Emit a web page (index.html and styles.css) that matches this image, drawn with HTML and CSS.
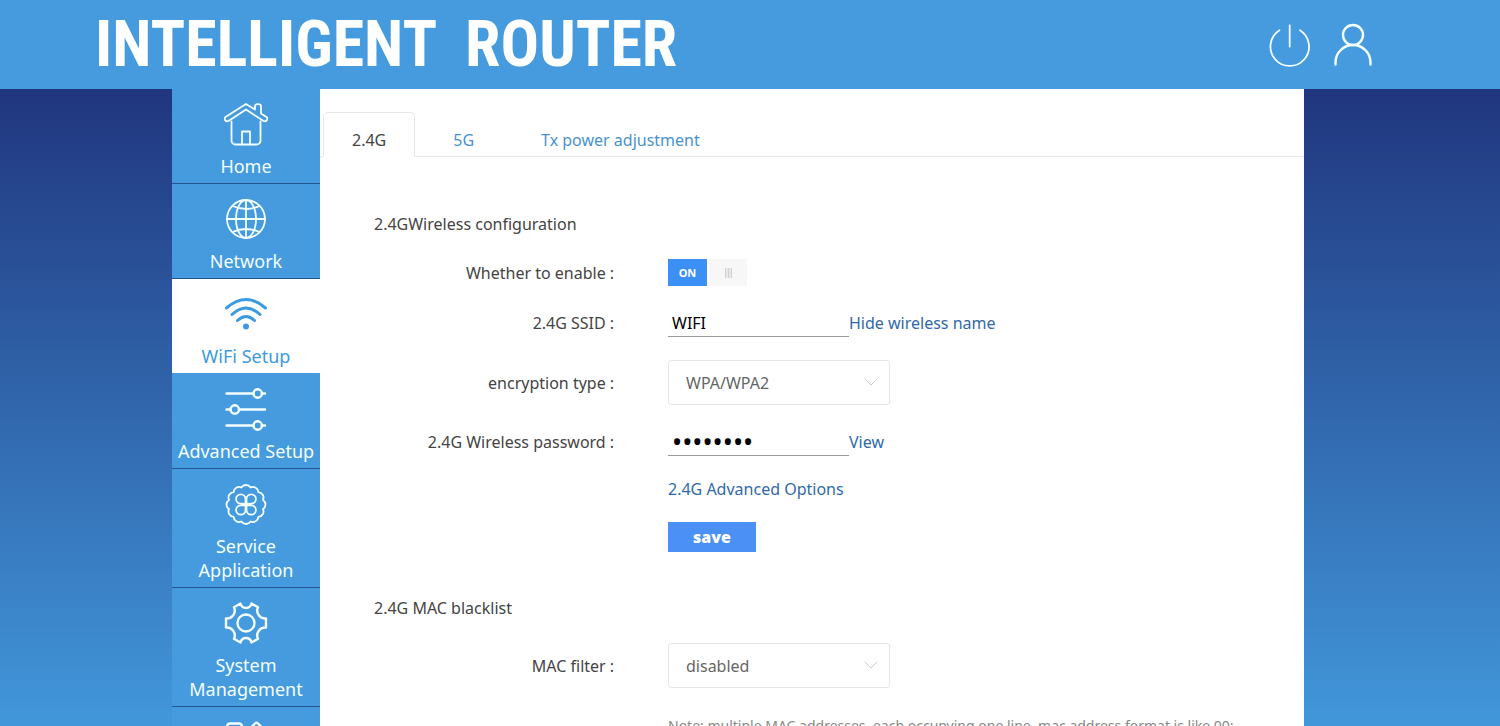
FILE: index.html
```html
<!DOCTYPE html>
<html lang="en">
<head>
  <meta charset="utf-8">
  <title>Intelligent Router</title>
  <meta name="viewport" content="width=device-width, initial-scale=1.0">
  <link rel="stylesheet" href="styles.css">
</head>
<body>
  <header class="header">
    <h1 class="logo"><span>INTELLIGENT</span> <span>ROUTER</span></h1>
    <div class="header-actions">
      <button type="button" class="icon-btn" aria-label="Reboot">
        <svg width="44" height="44" viewBox="0 0 44 44"><path d="M12.500 7.300A19.300 19.300 0 1 0 33 7.300"/><path d="M22.700 2.500v21"/></svg>
      </button>
      <button type="button" class="icon-btn user-btn" aria-label="Account">
        <svg width="44" height="44" viewBox="0 0 44 44"><circle cx="22" cy="12" r="10"/><path d="M4.500 41.500v-2a17.500 17.500 0 0 1 35 0v2"/></svg>
      </button>
    </div>
  </header>

  <div class="page">
    <nav class="sidebar">
      <a href="#" class="nav-item">
        <svg width="44" height="44" viewBox="0 0 44 44"><path d="M22 1 1.500 14c-2 2 0 5 3 4L22 6.500 39.500 18c3 1 5-2 3-4L37 10.500V3c0-2.500-6-2.500-6 0v3.500z"/><path d="M7.500 18.500v19a4 4 0 0 0 4 4h21a4 4 0 0 0 4-4v-19"/><path d="M18 41.500v-13h8v13"/></svg>
        Home
      </a>
      <a href="#" class="nav-item">
        <svg width="44" height="44" viewBox="0 0 44 44"><circle cx="22" cy="21" r="19"/><ellipse cx="22" cy="21" rx="10" ry="19"/><path d="M22 2v38M3 21h38M8.500 8q13.500 6 27 0M8.500 34q13.500-6 27 0"/></svg>
        Network
      </a>
      <a href="#" class="nav-item active">
        <svg class="wifi" width="44" height="44" viewBox="0 0 44 44"><path d="M2.500 15Q22-2 41.500 15M8 21.500q14-13 28 0M13.500 27.500q8.500-8 17 0"/><circle class="dot" cx="22" cy="33.500" r="3"/></svg>
        WiFi Setup
      </a>
      <a href="#" class="nav-item">
        <svg class="bold" width="44" height="44" viewBox="0 0 44 44"><path d="M2.500 5.500H29.500M38 5.500h3M2.500 21.500h4M15 21.500h26M2.500 37.500h27M38 37.500h3"/><circle cx="33.700" cy="5.500" r="4.200"/><circle cx="10.800" cy="21.500" r="4.200"/><circle cx="33.700" cy="37.500" r="4.200"/></svg>
        Advanced Setup
      </a>
      <a href="#" class="nav-item">
        <svg width="44" height="44" viewBox="0 0 44 44"><path d="M39 16.900A5.500 5.500 0 0 1 39 26.100 5.500 5.500 0 0 1 34.400 33.900 5.500 5.500 0 0 1 26.600 38.500 5.500 5.500 0 0 1 17.400 38.500 5.500 5.500 0 0 1 9.600 33.900 5.500 5.500 0 0 1 5 26.100 5.500 5.500 0 0 1 5 16.900 5.500 5.500 0 0 1 9.600 9.100 5.500 5.500 0 0 1 17.400 4.500 5.500 5.500 0 0 1 26.600 4.500 5.500 5.500 0 0 1 34.400 9.100 5.500 5.500 0 0 1 39 16.900z"/><path d="M21.500 21v-5a4.700 4.700 0 1 0-4.700 4.700zM22.500 21v-5a4.700 4.700 0 1 1 4.700 4.700zM21.500 22v5a4.700 4.700 0 1 1-4.700-4.700zM22.500 22v5a4.700 4.700 0 1 0 4.700-4.700z"/></svg>
        Service Application
      </a>
      <a href="#" class="nav-item">
        <svg class="gear" width="44" height="44" viewBox="0 0 44 44"><path d="M16.500 1.500C18 7.500 26 7.500 27.500 1.500L34 5.200C31.500 10.500 35.500 17 42 16.500V25.500C35.500 25 31.500 31.500 34 36.800L27.500 40.500C26 34.500 18 34.500 16.500 40.500L10 36.800C12.500 31.500 8.500 25 2 25.500V16.500C8.500 17 12.500 10.500 10 5.200z"/><circle cx="22" cy="21" r="8.500"/></svg>
        System Management
      </a>
      <a href="#" class="nav-item" aria-label="Apps">
        <svg class="bold" width="44" height="44" viewBox="0 0 44 44"><rect x="3" y="2.500" width="15" height="15" rx="3"/><rect x="3" y="25" width="15" height="15" rx="3"/><rect x="25" y="25" width="15" height="15" rx="3"/><path d="M31 2.500q1.500-1.500 3 0l7 7q1.500 1.500 0 3l-7 7q-1.500 1.500-3 0l-7-7q-1.500-1.500 0-3z"/></svg>
      </a>
    </nav>

    <main class="content">
      <div class="tabs">
        <a href="#" class="tab active">2.4G</a>
        <a href="#" class="tab">5G</a>
        <a href="#" class="tab">Tx power adjustment</a>
      </div>

      <form class="settings">
        <h2>2.4GWireless configuration</h2>
        <div class="row">
          <label class="name" for="enable">Whether to enable<span class="colon">:</span></label>
          <label class="switch">
            <input type="checkbox" id="enable" checked>
            <span class="switch-on">ON</span>
            <span class="switch-handle"></span>
          </label>
        </div>
        <div class="row">
          <label class="name" for="ssid">2.4G SSID<span class="colon">:</span></label>
          <input type="text" class="line-input" id="ssid" value="WIFI">
          <a href="#" class="link">Hide wireless name</a>
        </div>
        <div class="row">
          <label class="name" for="encryption">encryption type<span class="colon">:</span></label>
          <div class="select">
            <select id="encryption">
              <option>WPA/WPA2</option>
            </select>
            <svg width="14" height="8" viewBox="0 0 14 8"><path d="M1 1l6 6 6-6"/></svg>
          </div>
        </div>
        <div class="row">
          <label class="name" for="password">2.4G Wireless password<span class="colon">:</span></label>
          <input type="password" class="line-input password" id="password" value="12345678">
          <a href="#" class="link">View</a>
        </div>
        <div class="row no-label">
          <a href="#" class="link">2.4G Advanced Options</a>
        </div>
        <div class="row no-label">
          <button type="button" class="save-btn">save</button>
        </div>

        <h2 class="next">2.4G MAC blacklist</h2>
        <div class="row">
          <label class="name" for="mac-filter">MAC filter<span class="colon">:</span></label>
          <div class="select">
            <select id="mac-filter">
              <option>disabled</option>
            </select>
            <svg width="14" height="8" viewBox="0 0 14 8"><path d="M1 1l6 6 6-6"/></svg>
          </div>
        </div>
        <div class="row no-label">
          <p class="note">Note: multiple MAC addresses, each occupying one line, mac address format is like 00:</p>
        </div>
      </form>
    </main>
  </div>
</body>
</html>
```
FILE: styles.css
```css
* {
  box-sizing: border-box;
}

body {
  display: flex;
  flex-direction: column;
  height: 100vh;
  margin: 0;
  font-family: 'Segoe UI', 'Noto Sans', 'Open Sans', sans-serif;
  font-size: 16px;
  line-height: 24px;
  color: #444;
  background: #459bde;
}

a {
  text-decoration: none;
}

svg {
  flex: none;
  fill: none;
  stroke: currentColor;
  stroke-width: 1.8;
  stroke-linecap: round;
  stroke-linejoin: round;
}

/* header */
.header {
  display: flex;
  flex: none;
  justify-content: space-between;
  align-items: center;
  height: 89px;
  padding: 0 125px 0 95px;
  background: #459bde;
  color: #fff;
}

.logo {
  display: flex;
  gap: 28px;
  margin: 0;
  font-family: 'Roboto Condensed', 'Liberation Sans Narrow', 'Liberation Sans', sans-serif;
  font-size: 64px;
  line-height: 72px;
  font-weight: 700;
}

.header-actions {
  display: flex;
  gap: 20px;
}

.icon-btn {
  display: flex;
  padding: 0;
  border: none;
  background: none;
  color: #f4ffff;
  cursor: pointer;
}

.user-btn svg {
  stroke-width: 2.4;
}

/* layout */
.page {
  display: flex;
  flex: 1;
  min-height: 0;
  padding: 0 196px 0 172px;
  overflow: hidden;
  background: linear-gradient(#20367e, #4297db);
}

.sidebar {
  flex: none;
  width: 148px;
  background: #459bde;
}

.nav-item {
  display: flex;
  flex-direction: column;
  align-items: center;
  padding: 14px 2px 5px;
  border-bottom: 1px solid #25558f;
  color: #f4ffff;
  font-size: 18px;
  text-align: center;
}

.nav-item svg {
  margin-bottom: 7px;
}

.nav-item .bold,
.nav-item .gear {
  stroke-width: 2.4;
}

.nav-item .wifi {
  stroke-width: 3;
}

.nav-item .dot {
  fill: currentColor;
  stroke: none;
}

.nav-item.active {
  background: #fff;
  border-color: #459bde;
  color: #3b9ae0;
}

.content {
  flex: 1;
  min-width: 0;
  padding-top: 23px;
  background: #fff;
}

/* tabs */
.tabs {
  display: flex;
  gap: 9px;
  padding-left: 3px;
  border-bottom: 1px solid #e6e8ea;
}

.tab {
  padding: 15px 28px 4px;
  margin-bottom: -1px;
  border: 1px solid transparent;
  border-radius: 5px 5px 0 0;
  color: #4a92cc;
}

.tab.active {
  background: #fff;
  border-color: #e6e8ea;
  border-bottom-color: #fff;
  color: #444;
}

/* form */
.settings {
  display: flex;
  flex-direction: column;
  gap: 23px;
  padding: 55px 54px 0;
}

h2 {
  margin: 0;
  font-size: 16px;
  line-height: 24px;
  font-weight: 400;
}

h2.next {
  margin-top: 21px;
}

.row {
  display: flex;
  align-items: center;
}

.name {
  width: 240px;
  margin-right: 54px;
  text-align: right;
}

.colon {
  margin-left: 4px;
}

.no-label {
  padding-left: 294px;
}

.link {
  color: #2f6aa8;
  line-height: 20px;
}

.switch {
  display: flex;
  gap: 2px;
  height: 27px;
  cursor: pointer;
}

.switch input {
  appearance: none;
  position: absolute;
  margin: 0;
}

.switch-on {
  width: 39px;
  background: #3b8ff5;
  color: #fff;
  font-size: 11px;
  line-height: 27px;
  font-weight: 700;
  text-align: center;
}

.switch-handle {
  display: flex;
  justify-content: center;
  align-items: center;
  width: 38px;
  background: #f7f7f7;
}

.switch-handle::before {
  content: '';
  width: 7px;
  height: 10px;
  background: repeating-linear-gradient(90deg, #d2d2d2 0 1px, #e8e8e8 1px 3px);
}

.line-input {
  width: 181px;
  height: 28px;
  padding: 0 4px;
  border: none;
  border-bottom: 1px solid #999;
  outline: none;
  background: none;
  color: #000;
  font-family: inherit;
  font-size: 16px;
}

.line-input.password {
  font-size: 27px;
}

.select {
  position: relative;
  width: 222px;
}

.select select {
  appearance: none;
  display: block;
  width: 100%;
  height: 45px;
  padding: 0 17px;
  border: 1px solid #e6e6e6;
  border-radius: 3px;
  background: #fff;
  color: #666;
  font-family: inherit;
  font-size: 16px;
}

.select svg {
  position: absolute;
  top: 18px;
  right: 12px;
  stroke: #ccc;
  stroke-width: 1;
  pointer-events: none;
}

.save-btn {
  width: 88px;
  height: 30px;
  padding: 0;
  border: none;
  background: #4a90f5;
  color: #fff;
  font-family: inherit;
  font-size: 16px;
  font-weight: 900;
  cursor: pointer;
}

.note {
  margin: 3px 0 0;
  color: #888;
  font-size: 14px;
  white-space: nowrap;
}
```
